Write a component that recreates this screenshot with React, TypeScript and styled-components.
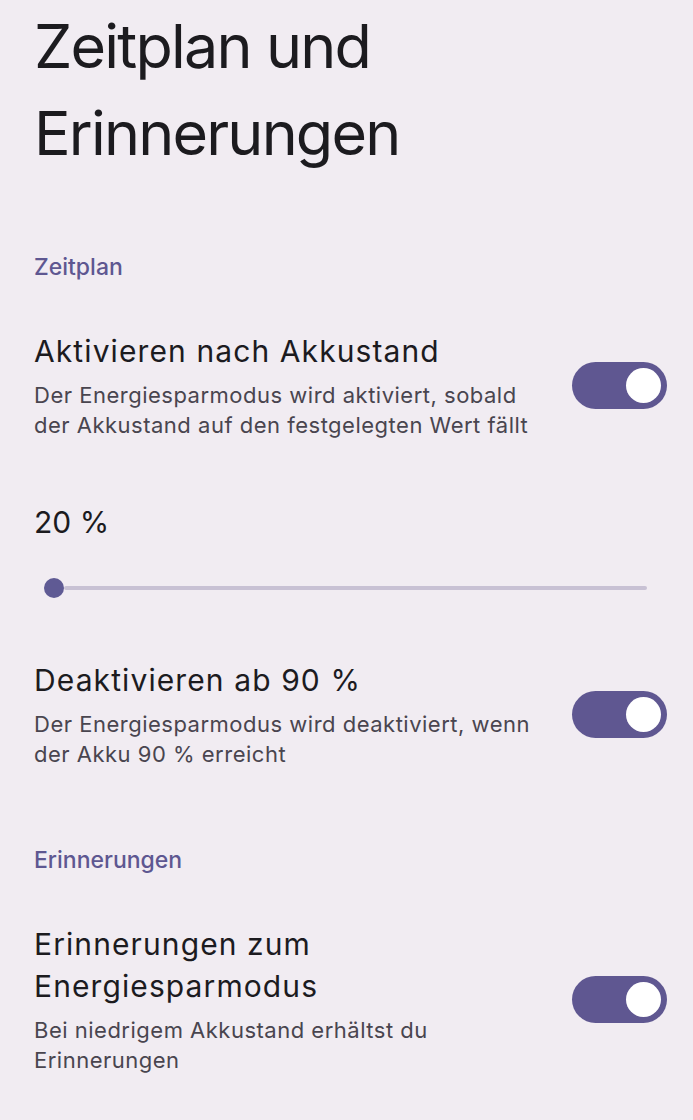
import React from "react";
import styled, { createGlobalStyle } from "styled-components";

const GlobalStyle = createGlobalStyle`
  html, body {
    margin: 0;
    padding: 0;
    background: #F1ECF2;
  }
  body {
    font-family: "Inter", "Noto Sans", sans-serif;
    -webkit-font-smoothing: antialiased;
  }
`;

const Page = styled.main`
  display: flex;
  flex-direction: column;
  padding: 3px 26px 0 34px;
  min-height: 1120px;
  box-sizing: border-box;
  background: #F1ECF2;
  color: #1C1B1F;
`;

const Title = styled.h1`
  margin: 0;
  font-family: "Inter", sans-serif;
  font-weight: 400;
  font-size: 61px;
  line-height: 87px;
  letter-spacing: -1.8px;
  color: #1C1B1F;
`;

const SectionHeader = styled.h2<{ $gap: number }>`
  margin: ${p => p.$gap}px 0 0;
  font-family: "Inter", sans-serif;
  font-weight: 500;
  font-size: 23px;
  line-height: 32px;
  color: #5E5791;
`;

const SwitchRow = styled.div<{ $gap: number }>`
  display: flex;
  align-items: center;
  justify-content: space-between;
  margin-top: ${p => p.$gap}px;
`;

const RowText = styled.div`
  display: flex;
  flex-direction: column;
  gap: 8px;
  max-width: 506px;
`;

const ItemTitle = styled.div<{ $muted?: boolean }>`
  font-family: "Inter", sans-serif;
  font-size: 30px;
  line-height: 42px;
  letter-spacing: 1.1px;
  color: ${p => (p.$muted ? "#9A96A0" : "#1C1B1F")};
`;

const ItemSummary = styled.div`
  font-family: "Inter", sans-serif;
  font-size: 22px;
  line-height: 30px;
  letter-spacing: 0.5px;
  color: #49454F;
`;

const SwitchTrack = styled.div`
  flex: 0 0 auto;
  display: flex;
  justify-content: flex-end;
  align-items: center;
  width: 95px;
  height: 47px;
  padding: 6px;
  box-sizing: border-box;
  border-radius: 24px;
  background: #5F5791;
`;

const SwitchThumb = styled.span`
  width: 35px;
  height: 35px;
  border-radius: 50%;
  background: #FFFFFF;
`;

const ValueLabel = styled.div<{ $gap: number }>`
  margin-top: ${p => p.$gap}px;
  font-family: "Inter", sans-serif;
  font-size: 30px;
  line-height: 40px;
  color: #1C1B1F;
`;

const Slider = styled.div`
  display: flex;
  align-items: center;
  height: 24px;
  margin: 34px 20px 0 10px;
`;

const SliderThumb = styled.span`
  flex: 0 0 auto;
  width: 20px;
  height: 20px;
  border-radius: 50%;
  background: #5F5A94;
`;

const SliderTrack = styled.span`
  flex: 1 1 auto;
  height: 4px;
  border-radius: 2px;
  background: #C8C1D4;
`;

const PeekRow = styled.div`
  margin-top: 39px;
`;

function Switch({ on }: { on: boolean }) {
  return (
    <SwitchTrack role="switch" aria-checked={on}>
      <SwitchThumb />
    </SwitchTrack>
  );
}

function SwitchPreference({ gap, title, summary }: { gap: number; title: string; summary: string }) {
  return (
    <SwitchRow $gap={gap}>
      <RowText>
        <ItemTitle>{title}</ItemTitle>
        <ItemSummary>{summary}</ItemSummary>
      </RowText>
      <Switch on />
    </SwitchRow>
  );
}

export default function App() {
  return (
    <>
      <GlobalStyle />
      <Page>
        <Title>
          Zeitplan und
          <br />
          Erinnerungen
        </Title>

        <SectionHeader $gap={74}>Zeitplan</SectionHeader>
        <SwitchPreference
          gap={47}
          title="Aktivieren nach Akkustand"
          summary="Der Energiesparmodus wird aktiviert, sobald der Akkustand auf den festgelegten Wert fällt"
        />

        <ValueLabel $gap={62}>20 %</ValueLabel>
        <Slider role="slider" aria-valuenow={20}>
          <SliderThumb />
          <SliderTrack />
        </Slider>

        <SwitchPreference
          gap={59}
          title="Deaktivieren ab 90 %"
          summary="Der Energiesparmodus wird deaktiviert, wenn der Akku 90 % erreicht"
        />

        <SectionHeader $gap={75}>Erinnerungen</SectionHeader>
        <SwitchPreference
          gap={47}
          title="Erinnerungen zum Energiesparmodus"
          summary="Bei niedrigem Akkustand erhältst du Erinnerungen"
        />

        <PeekRow>
          <ItemTitle $muted>Weitere</ItemTitle>
        </PeekRow>
      </Page>
    </>
  );
}
